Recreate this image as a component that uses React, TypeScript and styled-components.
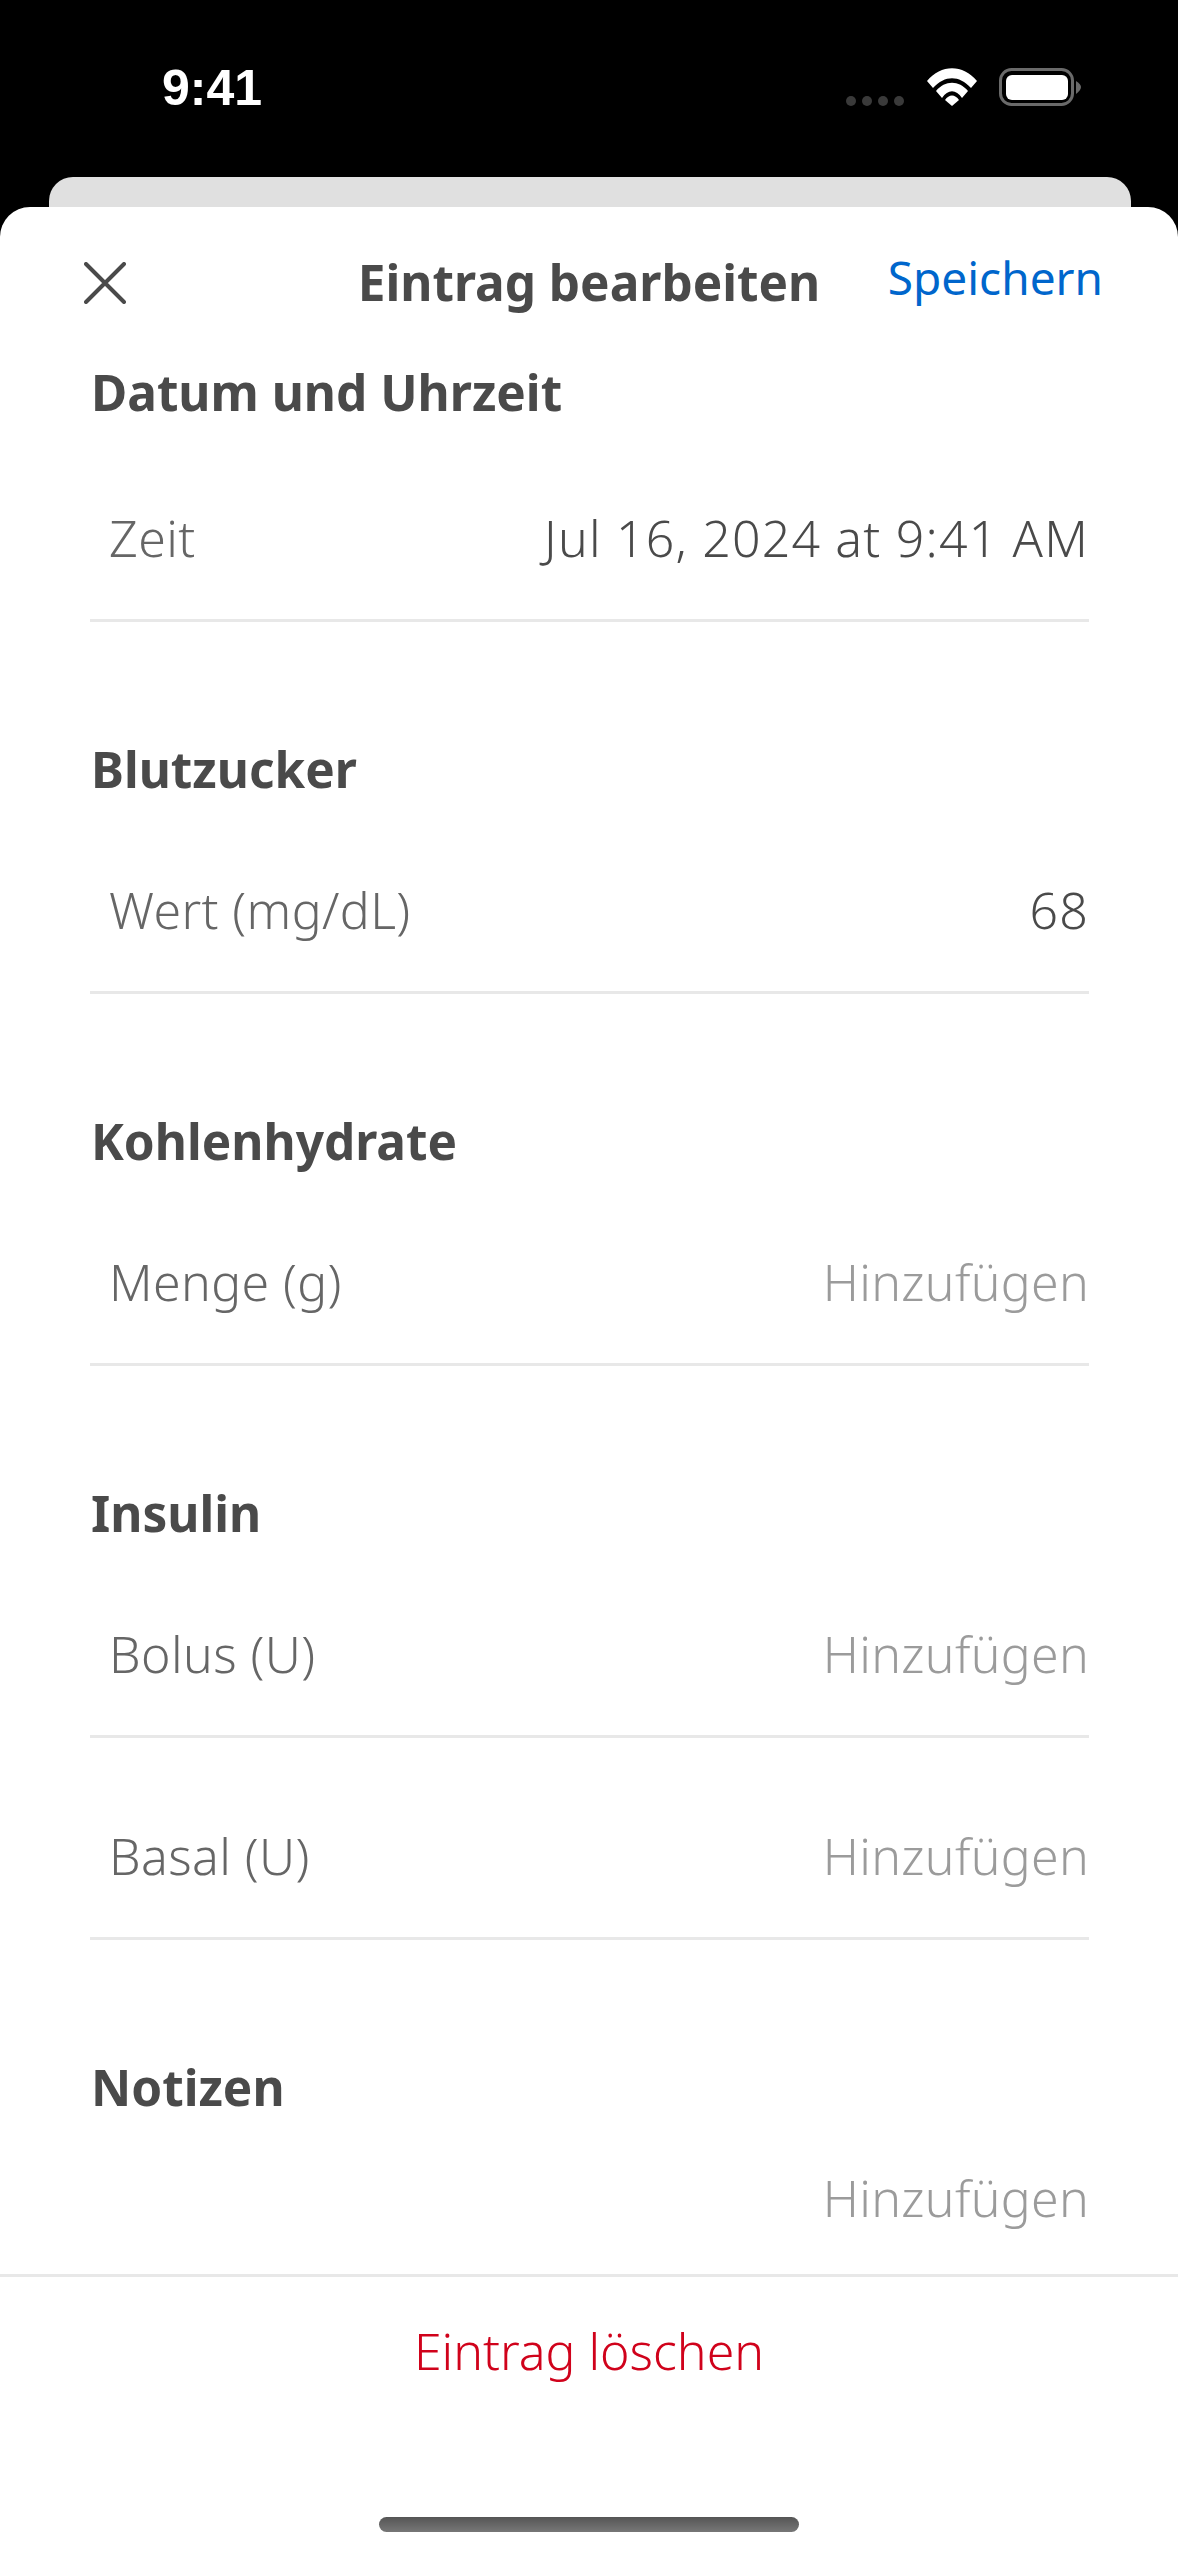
import type { FC } from 'react'
import styled, { createGlobalStyle } from 'styled-components'

const GlobalStyle = createGlobalStyle`
  html, body {
    margin: 0;
    padding: 0;
    background: #000;
  }
  * {
    box-sizing: border-box;
  }
`

const Screen = styled.div`
  width: 1178px;
  height: 2556px;
  display: flex;
  flex-direction: column;
  overflow: hidden;
  background: #000;
  font-family: 'Noto Sans', sans-serif;
`

const StatusBar = styled.div`
  height: 177px;
  flex-shrink: 0;
  display: flex;
  justify-content: space-between;
  align-items: flex-start;
  padding: 60px 97px 0 162px;
`

const Clock = styled.div`
  font-family: 'Liberation Sans', sans-serif;
  font-size: 50px;
  line-height: 56px;
  font-weight: 700;
  color: #fff;
`

const StatusIcons = styled.div`
  display: flex;
  align-items: flex-start;
  padding-top: 8px;
`

const SignalDots = styled.div`
  display: flex;
  gap: 6px;
  margin: 28px 23px 0 0;
`

const Dot = styled.div`
  width: 10px;
  height: 10px;
  border-radius: 50%;
  background: #3a3a3a;
`

const WifiIcon = styled.svg`
  width: 50px;
  height: 38px;
  margin-right: 22px;
`

const BatteryIcon = styled.svg`
  width: 82px;
  height: 38px;
`

const BackCard = styled.div`
  height: 30px;
  flex-shrink: 0;
  margin: 0 47px 0 49px;
  background: #e0e0e0;
  border-radius: 24px 24px 0 0;
`

const Sheet = styled.div`
  flex: 1;
  min-height: 0;
  display: flex;
  flex-direction: column;
  background: #fff;
  border-radius: 30px 30px 0 0;
`

const Header = styled.div`
  position: relative;
  height: 151px;
  flex-shrink: 0;
  display: flex;
  align-items: center;
  justify-content: center;
`

const CloseIcon = styled.svg`
  position: absolute;
  left: 84px;
  top: 55px;
  width: 42px;
  height: 42px;
`

const Title = styled.div`
  font-size: 49.5px;
  line-height: 60px;
  font-weight: 700;
  color: #4a4a4a;
  margin-top: -2px;
`

const SaveAction = styled.div`
  position: absolute;
  right: 75px;
  top: 40px;
  font-size: 46px;
  line-height: 60px;
  color: #0066cc;
`

const Content = styled.div`
  flex: 1;
  min-height: 0;
  overflow: hidden;
  padding: 0 89px 0 90px;
`

const SectionTitle = styled.div`
  height: 68px;
  padding-left: 1px;
  font-size: 49.5px;
  line-height: 68px;
  font-weight: 700;
  color: #4a4a4a;
`

const Section = styled.section`
  margin-bottom: 113px;

  &:first-child ${SectionTitle} {
    height: 73px;
  }

  &:last-child {
    margin-bottom: 0;
  }
`

const Row = styled.div<{ $plain?: boolean }>`
  display: flex;
  justify-content: space-between;
  align-items: center;
  margin-top: ${({ $plain }) => ($plain ? '46px' : '26px')};
  padding: ${({ $plain }) => ($plain ? '0' : '50px 0')};
  padding-left: 19px;
  font-size: 50px;
  line-height: 62px;
  border-bottom: ${({ $plain }) => ($plain ? 'none' : '3px solid #e8e8e8')};

  & + & {
    margin-top: 37px;
  }
`

const RowLabel = styled.span`
  color: #666;
  font-weight: 300;
  letter-spacing: 0.4px;
`

const RowValue = styled.span<{ $empty?: boolean }>`
  color: ${({ $empty }) => ($empty ? '#9b9b9b' : '#4a4a4a')};
  font-weight: 300;
  letter-spacing: ${({ $empty }) => ($empty ? '0.3px' : '1.2px')};
`

const Footer = styled.div`
  flex-shrink: 0;
  height: 282px;
  display: flex;
  flex-direction: column;
  align-items: center;
  border-top: 3px solid #e8e8e8;
  padding-top: 44px;
`

const DeleteAction = styled.div`
  font-size: 50px;
  line-height: 60px;
  font-weight: 300;
  color: #d0021b;
`

const HomeIndicator = styled.div`
  width: 420px;
  height: 15px;
  margin-top: 136px;
  border-radius: 8px;
  background: linear-gradient(#555, #777);
`

const ADD = 'Hinzufügen'

const App: FC = () => (
  <Screen>
    <GlobalStyle />
    <StatusBar>
      <Clock>9:41</Clock>
      <StatusIcons>
        <SignalDots>
          <Dot />
          <Dot />
          <Dot />
          <Dot />
        </SignalDots>
        <WifiIcon viewBox="0 0 50 38">
          <path d="M0 13 C14 -4 36 -4 50 13 L44 20 C32 7 18 7 6 20 Z" fill="#fff" />
          <path d="M9 23 C18 12 32 12 41 23 L35 30 C29 21 21 21 15 30 Z" fill="#fff" />
          <path d="M18 32 C22 26 28 26 32 32 L25 38 Z" fill="#fff" />
        </WifiIcon>
        <BatteryIcon viewBox="0 0 82 38">
          <rect x="1.5" y="1.5" width="72" height="35" rx="11" fill="none" stroke="#6a6a6a" strokeWidth="3" />
          <rect x="7" y="7" width="62" height="25" rx="6" fill="#fff" />
          <path d="M77 13 C80 15 82 17 82 19 C82 21 80 24 77 26 Z" fill="#6a6a6a" />
        </BatteryIcon>
      </StatusIcons>
    </StatusBar>
    <BackCard />
    <Sheet>
      <Header>
        <CloseIcon viewBox="0 0 42 42">
          <path d="M2 2 L40 40 M40 2 L2 40" stroke="#4a4a4a" strokeWidth="4" strokeLinecap="round" fill="none" />
        </CloseIcon>
        <Title>Eintrag bearbeiten</Title>
        <SaveAction>Speichern</SaveAction>
      </Header>
      <Content>
        <Section>
          <SectionTitle>Datum und Uhrzeit</SectionTitle>
          <Row>
            <RowLabel>Zeit</RowLabel>
            <RowValue>Jul 16, 2024 at 9:41 AM</RowValue>
          </Row>
        </Section>
        <Section>
          <SectionTitle>Blutzucker</SectionTitle>
          <Row>
            <RowLabel>Wert (mg/dL)</RowLabel>
            <RowValue>68</RowValue>
          </Row>
        </Section>
        <Section>
          <SectionTitle>Kohlenhydrate</SectionTitle>
          <Row>
            <RowLabel>Menge (g)</RowLabel>
            <RowValue $empty>{ADD}</RowValue>
          </Row>
        </Section>
        <Section>
          <SectionTitle>Insulin</SectionTitle>
          <Row>
            <RowLabel>Bolus (U)</RowLabel>
            <RowValue $empty>{ADD}</RowValue>
          </Row>
          <Row>
            <RowLabel>Basal (U)</RowLabel>
            <RowValue $empty>{ADD}</RowValue>
          </Row>
        </Section>
        <Section>
          <SectionTitle>Notizen</SectionTitle>
          <Row $plain>
            <span />
            <RowValue $empty>{ADD}</RowValue>
          </Row>
        </Section>
      </Content>
      <Footer>
        <DeleteAction>Eintrag löschen</DeleteAction>
        <HomeIndicator />
      </Footer>
    </Sheet>
  </Screen>
)

export default App
